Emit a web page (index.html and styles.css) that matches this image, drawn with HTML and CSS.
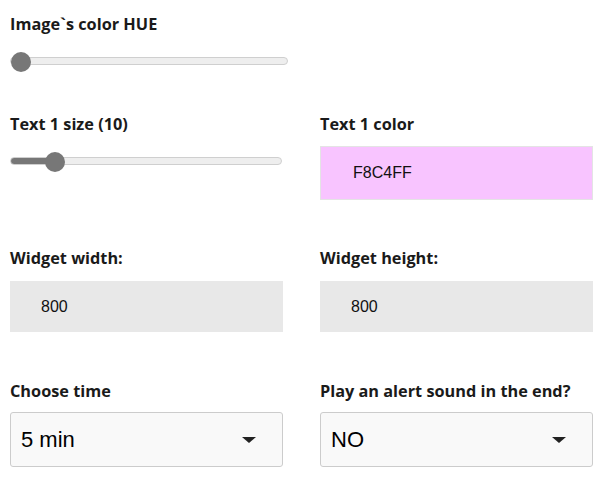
FILE: index.html
```html
<!DOCTYPE html>
<html>
<head>
<meta charset="utf-8">
<link rel="stylesheet" href="styles.css">
</head>
<body>
<div class="page">
  <div class="field hue">
    <label class="label">Image`s color HUE</label>
    <input class="slider wide" type="range" min="0" max="360" value="0" style="--fill: 0%">
  </div>

  <div class="row row2">
    <div class="field">
      <label class="label">Text 1 size (10)</label>
      <input class="slider" type="range" min="5" max="42" value="10" style="--fill: 16%">
    </div>
    <div class="field">
      <label class="label">Text 1 color</label>
      <div class="box color">F8C4FF</div>
    </div>
  </div>

  <div class="row row3">
    <div class="field">
      <label class="label">Widget width:</label>
      <div class="box gray">800</div>
    </div>
    <div class="field">
      <label class="label">Widget height:</label>
      <div class="box gray">800</div>
    </div>
  </div>

  <div class="row row4">
    <div class="field">
      <label class="label label-sel">Choose time</label>
      <div class="select"><span>5 min</span><svg class="caret" width="14" height="6" viewBox="0 0 14 6"><path d="M0 0 H14 L7 6 Z" fill="#222"/></svg></div>
    </div>
    <div class="field">
      <label class="label label-sel">Play an alert sound in the end?</label>
      <div class="select"><span>NO</span><svg class="caret" width="14" height="6" viewBox="0 0 14 6"><path d="M0 0 H14 L7 6 Z" fill="#222"/></svg></div>
    </div>
  </div>
</div>
</body>
</html>
```

FILE: styles.css
```css
html, body {
  margin: 0;
  padding: 0;
  background: #ffffff;
}

.page {
  padding: 13px 15px 0 10px;
  font-family: "Open Sans", "Liberation Sans", sans-serif;
  color: #1d1d1d;
}

.label {
  display: block;
  font-family: "Open Sans", sans-serif;
  font-weight: 700;
  font-size: 16.3px;
  line-height: 22px;
  color: #1a1a1a;
}

.field {
  display: flex;
  flex-direction: column;
}

.row {
  display: grid;
  grid-template-columns: 273px 273px;
  column-gap: 37px;
}

.row2 { margin-top: 42px; }
.row3 { margin-top: 47px; }
.row4 { margin-top: 48px; }

/* sliders */
.slider {
  -webkit-appearance: none;
  appearance: none;
  margin: 16px 0 0 0;
  padding: 0;
  width: 272px;
  height: 20px;
  background: transparent;
}
.slider.wide { width: 278px; }

.slider::-webkit-slider-runnable-track {
  height: 8px;
  border: 1px solid #cfcfcf;
  border-radius: 5px;
  background: linear-gradient(to right, #777777 var(--fill), #eeeeee var(--fill));
}

.slider::-webkit-slider-thumb {
  -webkit-appearance: none;
  appearance: none;
  width: 20px;
  height: 20px;
  border-radius: 50%;
  background: #777777;
  border: none;
  margin-top: -6px;
}

/* boxes */
.box {
  display: flex;
  align-items: center;
  box-sizing: border-box;
  font-family: "Liberation Sans", Arial, sans-serif;
  color: #111;
}

.color {
  margin-top: 11px;
  height: 54px;
  padding-left: 32px;
  background: #F8C4FF;
  border: 1px solid #e4e4e4;
  font-size: 16px;
}

.gray {
  margin-top: 12px;
  height: 51px;
  padding-left: 31px;
  background: #e8e8e8;
  font-size: 16px;
}

/* selects */
.select {
  margin-top: 10px;
  box-sizing: border-box;
  height: 55px;
  display: flex;
  align-items: center;
  justify-content: space-between;
  padding: 0 26px 0 10px;
  background: #f9f9f9;
  border: 1px solid #cccccc;
  border-radius: 3px;
  font-family: "Liberation Sans", Arial, sans-serif;
  font-size: 22px;
  color: #000;
}

.caret {
  display: block;
  margin-top: 1px;
}
```
